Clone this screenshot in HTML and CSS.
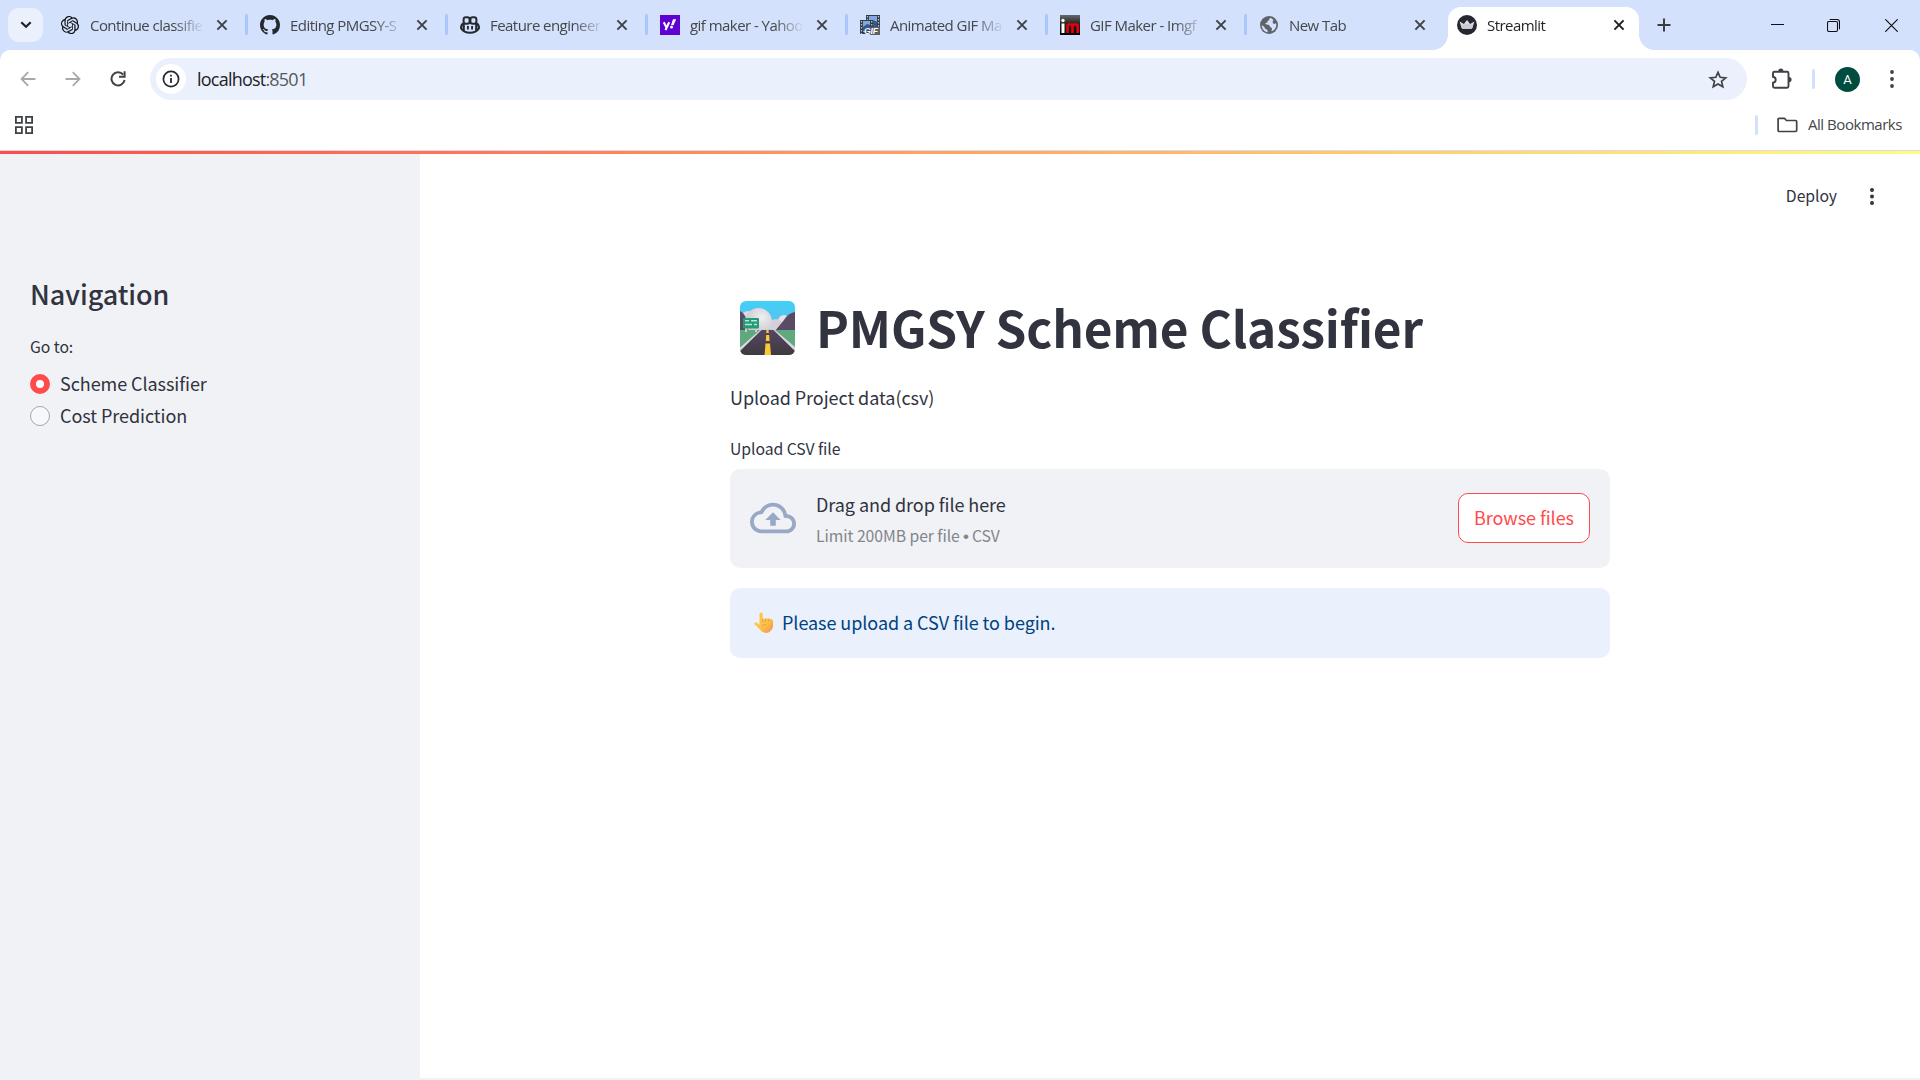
FILE: index.html
```html
<!DOCTYPE html>
<html lang="en">
<head>
<meta charset="utf-8">
<title>Streamlit</title>
<link rel="stylesheet" href="styles.css">
</head>
<body>
<svg class="defs" aria-hidden="true">
  <symbol id="close" viewBox="0 0 12 12"><path d="M1.4 1.4l9.2 9.2M10.6 1.4l-9.2 9.2" fill="none" stroke="currentColor" stroke-width="2"/></symbol>
</svg>
<div class="browser">
  <div class="tabstrip">
    <button class="tab-search"><svg width="12" height="8" viewBox="0 0 12 8"><path d="M1.3 1.3L6 5.8l4.700-4.500" fill="none" stroke="#1f2124" stroke-width="2.200"/></svg></button>
    <div class="tabs">
      <div class="tab">
        <svg class="fav" viewBox="-1.200 -1.200 26.400 26.400"><path fill="#111" d="M22.2819 9.8211a5.9847 5.9847 0 0 0-.5157-4.9108 6.0462 6.0462 0 0 0-6.5098-2.9A6.0651 6.0651 0 0 0 4.9807 4.1818a5.9847 5.9847 0 0 0-3.9977 2.9 6.0462 6.0462 0 0 0 .7427 7.0966 5.98 5.98 0 0 0 .511 4.9107 6.051 6.051 0 0 0 6.5146 2.9001A5.9847 5.9847 0 0 0 13.2599 24a6.0557 6.0557 0 0 0 5.7718-4.2058 5.9894 5.9894 0 0 0 3.9977-2.9001 6.0557 6.0557 0 0 0-.7475-7.0729zm-9.022 12.6081a4.4755 4.4755 0 0 1-2.8764-1.0408l.1419-.0804 4.7783-2.7582a.7948.7948 0 0 0 .3927-.6813v-6.7369l2.02 1.1686a.071.071 0 0 1 .038.052v5.5826a4.504 4.504 0 0 1-4.4945 4.4944zm-9.6607-4.1254a4.4708 4.4708 0 0 1-.5346-3.0137l.142.0852 4.783 2.7582a.7712.7712 0 0 0 .7806 0l5.8428-3.3685v2.3324a.0804.0804 0 0 1-.0332.0615L9.74 19.9502a4.4992 4.4992 0 0 1-6.1408-1.6464zM2.3408 7.8956a4.485 4.485 0 0 1 2.3655-1.9728V11.6a.7664.7664 0 0 0 .3879.6765l5.8144 3.3543-2.0201 1.1685a.0757.0757 0 0 1-.071 0l-4.8303-2.7865A4.504 4.504 0 0 1 2.3408 7.872zm16.5963 3.8558L13.1038 8.364 15.1192 7.2a.0757.0757 0 0 1 .071 0l4.8303 2.7913a4.4944 4.4944 0 0 1-.6765 8.1042v-5.6772a.79.79 0 0 0-.407-.667zm2.0107-3.0231l-.142-.0852-4.7735-2.7818a.7759.7759 0 0 0-.7854 0L9.409 9.2297V6.8974a.0662.0662 0 0 1 .0284-.0615l4.8303-2.7866a4.4992 4.4992 0 0 1 6.6802 4.66zM8.3065 12.863l-2.02-1.1638a.0804.0804 0 0 1-.038-.0567V6.0742a4.4992 4.4992 0 0 1 7.3757-3.4537l-.142.0805L8.704 5.459a.7948.7948 0 0 0-.3927.6813zm1.0976-2.3654l2.602-1.4998 2.6069 1.4998v2.9994l-2.5974 1.4997-2.6067-1.4997Z"/></svg>
        <span class="label">Continue classifie</span><svg class="x"><use href="#close"/></svg><i class="sep"></i>
      </div>
      <div class="tab">
        <svg class="fav" viewBox="0 0 16 16"><path fill="#24292f" d="M8 0C3.58 0 0 3.58 0 8c0 3.54 2.29 6.53 5.47 7.59.4.07.55-.17.55-.38 0-.19-.01-.82-.01-1.49-2.01.37-2.53-.49-2.69-.94-.09-.23-.48-.94-.82-1.13-.28-.15-.68-.52-.01-.53.63-.01 1.08.58 1.23.82.72 1.21 1.87.87 2.33.66.07-.52.28-.87.51-1.07-1.78-.2-3.64-.89-3.64-3.95 0-.87.31-1.59.82-2.15-.08-.2-.36-1.02.08-2.12 0 0 .67-.21 2.2.82.64-.18 1.320-.27 2-.27s1.360.09 2 .27c1.530-1.040 2.200-.82 2.200-.82.44 1.100.16 1.920.08 2.120.51.56.82 1.270.82 2.150 0 3.070-1.870 3.750-3.650 3.950.29.25.54.73.54 1.480 0 1.070-.01 1.930-.01 2.200 0 .21.15.46.55.38A8.010 8.010 0 0 0 16 8c0-4.420-3.580-8-8-8z"/></svg>
        <span class="label">Editing PMGSY-S</span><svg class="x"><use href="#close"/></svg><i class="sep"></i>
      </div>
      <div class="tab">
        <svg class="fav" viewBox="0 0 20 20"><g fill="none" stroke="#24292f"><rect x="3.600" y="2.200" width="6" height="6.600" rx="2.300" stroke-width="2"/><rect x="10.400" y="2.200" width="6" height="6.600" rx="2.300" stroke-width="2"/><path d="M3.500 8.500C1.200 9.500 1 10.800 1 13.200c1.800 2.900 5 4.600 9 4.600s7.200-1.700 9-4.600c0-2.400-.2-3.700-2.500-4.700" stroke-width="2"/><path d="M3.700 9v6.800M16.300 9v6.800" stroke-width="2.200"/><path d="M7.900 11v3.400M12.100 11v3.400" stroke-width="1.900"/></g></svg>
        <span class="label">Feature engineer</span><svg class="x"><use href="#close"/></svg><i class="sep"></i>
      </div>
      <div class="tab">
        <svg class="fav" viewBox="0 0 20 20"><path fill="#5f01d1" d="M0 0h20v20H0z"/><path d="M3.800 7.200l2.700 5.400M9.200 7.200l-3.700 7.800" stroke="#fff" stroke-width="2.100" fill="none"/><path d="M13 4.200h3.200l-2.700 6h-2.500z" fill="#fff"/><circle cx="11.500" cy="12.200" r="1.400" fill="#fff"/></svg>
        <span class="label">gif maker - Yahoo</span><svg class="x"><use href="#close"/></svg><i class="sep"></i>
      </div>
      <div class="tab">
        <svg class="fav" viewBox="0 0 20 20"><path fill="#333b46" d="M6 0h14v13H6z"/><path fill="#83a9dc" d="M9 1h8v11H9z"/><path fill="#35588f" d="M9 8l4-3 4 2v5H9z"/><path d="M7.500 1v12M18.500 1v12" stroke="#b5bfcc" stroke-width="1.300" stroke-dasharray="1.500 1.500"/><path fill="#333b46" d="M0 5h13v14H0z"/><path fill="#83a9dc" d="M3 6h7v11H3z"/><path fill="#35588f" d="M3 12l4-3 3 1v6H3z"/><path d="M1.500 6v13M11.700 6v6" stroke="#b5bfcc" stroke-width="1.300" stroke-dasharray="1.500 1.500"/><path fill="#5d6268" d="M10 12h10v8H10z"/><text x="4" y="19" class="giftext">GIF</text></svg>
        <span class="label">Animated GIF Ma</span><svg class="x"><use href="#close"/></svg><i class="sep"></i>
      </div>
      <div class="tab narrow">
        <svg class="fav" viewBox="0 0 20 20"><defs><linearGradient id="img" x2="0" y2="1"><stop stop-color="#686868"/><stop offset=".45" stop-color="#222"/><stop offset="1" stop-color="#050505"/></linearGradient></defs><path fill="url(#img)" d="M0 0h20v20H0z"/><path d="M3 8.500V18" stroke="#fff" stroke-width="3"/><circle cx="3" cy="5.500" r="1.700" fill="#fff"/><path d="M7.500 18V11q0-1.500 1.500-1.500h2q1.500 0 1.500 1.500v7M12.500 11q0-1.500 1.500-1.500h2.200q1.500 0 1.500 1.500v7" fill="none" stroke="#e6000b" stroke-width="2.700"/></svg>
        <span class="label">GIF Maker - Imgf</span><svg class="x"><use href="#close"/></svg><i class="sep"></i>
      </div>
      <div class="tab last">
        <svg class="fav globe" viewBox="0 0 18 18"><circle cx="9" cy="9" r="9" fill="#5f6368"/><path d="M11 1.900C9.200 2.100 9 3.300 9.300 4.300 7.700 4.500 7.200 5.300 7.500 6.400L5.200 7.300C5.700 9 8 8.300 9 9.100c1.200 1 .6 2.100 2 2.300 1.300.2 1.200 1.600.3 3.900 3-.8 5-3.400 5-6.300 0-.7-.1-1.100-.3-1.700-1.400.9-2.700.8-3.100-.2-.5-1.200-.3-2.200.6-2.900C12.700 3.200 12 2.400 11 1.900zM1.700 9c0 3.700 2.600 6.700 6 7.200 0-1.800-.1-2.500-1.200-2.700-1.400-.3-1.500-1.800-2.300-2.600C3.300 10 2.300 10 1.700 9z" fill="#d3e1fc"/></svg>
        <span class="label">New Tab</span><svg class="x"><use href="#close"/></svg>
      </div>
      <div class="tab active">
        <svg class="fav" viewBox="0 0 20 20"><circle cx="10" cy="10" r="10" fill="#262730"/><path d="M2.600 6.500l4.300 2.400L10 5l3.100 3.900 4.300-2.400-2 6.200q-.3 1-1.300 1H5.900q-1 0-1.300-1z" fill="#e0e1e3"/><path d="M3.700 10l6.300-1.500L16.300 10l-.9 2.700q-.3 1-1.300 1H5.900q-1 0-1.300-1z" fill="#cbccd0"/></svg>
        <span class="label">Streamlit</span><svg class="x"><use href="#close"/></svg>
      </div>
    </div>
    <svg class="newtab" width="14" height="14" viewBox="0 0 14 14"><path d="M7 .5v13M.5 7h13" stroke="#3c3d40" stroke-width="2"/></svg>
    <div class="window-controls">
      <svg width="13" height="13" viewBox="0 0 13 13"><path d="M0 5.500h13" stroke="#111"/></svg>
      <svg width="13" height="13" viewBox="0 0 13 13" fill="none" stroke="#111" stroke-width="1.100"><rect x=".5" y="2.500" width="10" height="10" rx="1.500"/><path d="M2.700.5H10q2.500 0 2.500 2.500v7.300"/></svg>
      <svg width="13" height="13" viewBox="0 0 13 13"><path d="M.3.3l12.400 12.400M12.700.3L.3 12.700" stroke="#111" stroke-width="1.200"/></svg>
    </div>
  </div>
  <div class="chrome">
    <div class="toolbar">
      <div class="nav-icons">
        <svg width="16" height="16" viewBox="0 0 16 16" fill="none" stroke="#a7a9ac" stroke-width="1.800"><path d="M15.500 8H1.700M8.200 1.200L1.500 8l6.700 6.800"/></svg>
        <svg width="16" height="16" viewBox="0 0 16 16" fill="none" stroke="#a7a9ac" stroke-width="1.800"><path d="M.5 8h13.800M7.800 1.200L14.500 8l-6.700 6.800"/></svg>
        <svg width="16" height="16" viewBox="0 0 16 16" fill="none" stroke="#3f4246" stroke-width="2"><path d="M13.200 3.600A6.600 6.600 0 1 0 14.600 9"/><path d="M14.600.2v5.600H9" /></svg>
      </div>
      <div class="omnibox">
        <span class="info"><svg width="18" height="18" viewBox="0 0 18 18"><circle cx="9" cy="9" r="7.600" fill="none" stroke="#26282b" stroke-width="1.700"/><path d="M9 8v5M9 4.700v1.900" stroke="#26282b" stroke-width="1.800"/></svg></span>
        <span class="url">localhost<em>:8501</em></span>
        <svg class="star" width="20" height="19" viewBox="0 0 20 19"><path d="M10 2.300l2.200 5 5.500.5-4.200 3.600 1.300 5.400L10 14l-4.800 2.800 1.300-5.400-4.200-3.600 5.500-.5z" fill="none" stroke="#3f4246" stroke-width="1.700"/></svg>
      </div>
      <div class="actions">
        <svg class="puzzle" width="22" height="22" viewBox="0 0 22 22"><path d="M3.500 3.700H16q1.500 0 1.500 1.500v13q0 1.500-1.500 1.500H3.500q-1.500 0-1.500-1.500v-3.500q2.700-.5 2.700-3T2 8.700V5.200q0-1.500 1.500-1.500z" fill="none" stroke="#3f4246" stroke-width="1.900"/><path d="M7.200 3.200a2.600 2.600 0 0 1 5.200 0zM18 9a2.600 2.600 0 0 1 0 5.200z" fill="#3f4246"/></svg>
        <i class="divider"></i>
        <span class="avatar">A</span>
        <svg class="kebab" width="4" height="18" viewBox="0 0 4 18" fill="#3f4246"><circle cx="2" cy="2" r="1.900"/><circle cx="2" cy="9" r="1.900"/><circle cx="2" cy="16" r="1.900"/></svg>
      </div>
    </div>
    <div class="bookmarks">
      <svg class="apps" width="18" height="18" viewBox="0 0 18 18" fill="none" stroke="#3f4246" stroke-width="1.800"><path d="M.9.9h6v6h-6zM11.100.9h6v6h-6zM.9 11.100h6v6h-6zM11.100 11.100h6v6h-6z"/></svg>
      <i class="divider"></i>
      <svg class="folder" width="21" height="16" viewBox="0 0 21 16"><path d="M2 1.400h5.500l2 2.100H18.500q1.200 0 1.200 1.200v8.600q0 1.200-1.200 1.200H2.300q-1.200 0-1.200-1.200V2.400q0-1 .9-1z" fill="none" stroke="#3f4246" stroke-width="1.700"/></svg>
      <span class="all">All Bookmarks</span>
    </div>
  </div>
</div>
<div class="decoration"></div>
<div class="app">
  <aside class="sidebar">
    <h2>Navigation</h2>
    <p class="small">Go to:</p>
    <div class="radio"><span class="dot on"></span><span>Scheme Classifier</span></div>
    <div class="radio"><span class="dot"></span><span>Cost Prediction</span></div>
  </aside>
  <main>
    <header><span class="deploy">Deploy</span><svg width="4" height="17" viewBox="0 0 4 17" fill="#31333f"><circle cx="2" cy="2" r="2"/><circle cx="2" cy="8.500" r="2"/><circle cx="2" cy="15" r="2"/></svg></header>
    <section class="block">
      <h1>
        <svg class="road" width="55" height="54" viewBox="0 0 55 54">
          <defs>
            <clipPath id="rr"><rect width="55" height="54" rx="6"/></clipPath>
            <linearGradient id="sky" x2="0" y2="1"><stop stop-color="#41d0f6"/><stop offset="1" stop-color="#62bdf0"/></linearGradient>
            <radialGradient id="cl" cx=".62" cy=".35" r=".7"><stop stop-color="#f1eff2"/><stop offset="1" stop-color="#c6c2ca"/></radialGradient>
            <linearGradient id="rd" x2="0" y2="1"><stop stop-color="#574661"/><stop offset="1" stop-color="#3d3b40"/></linearGradient>
          </defs>
          <g clip-path="url(#rr)">
            <path fill="url(#sky)" d="M0 0h55v30H0z"/>
            <circle cx="44" cy="20" r="6" fill="#e4e1e7"/><circle cx="36" cy="25" r="7" fill="#d4d0d8"/>
            <circle cx="8" cy="17" r="7" fill="#dedae0"/>
            <path d="M0 10q4 2 6 7l13 13H0zM55 11q-7 1-11 8L35 30h20z" fill="#594b65"/>
            <circle cx="18.500" cy="20.500" r="13.500" fill="url(#cl)"/>
            <path d="M0 29h55v25H0z" fill="#5fa97c"/>
            <path d="M20 29h15l24 25H-4z" fill="url(#rd)"/>
            <path d="M20 29h1.500L0 50v-3.500zM33.500 29H35l20 17v4z" fill="#dcd7df"/>
            <path d="M26.500 29h2l.3 3h-2.600zM26.200 34h3l.4 6h-3.800zM25.500 42.500h4.500l1 11.500h-6.500z" fill="#fcc737"/>
            <path d="M5 26h2v5H5zM15 26h2v5h-2z" fill="#cfcbd4"/>
            <rect x="3" y="17" width="16" height="10.500" rx="1" fill="#239c75"/>
            <path d="M5 19.800h4M11 19.800h6M5 23.500h7M14 23.500h3" stroke="#bbe6d5" stroke-width="1.500"/>
          </g>
        </svg>
        <span>PMGSY Scheme Classifier</span>
      </h1>
      <p class="body">Upload Project data(csv)</p>
      <p class="small">Upload CSV file</p>
      <div class="dropzone">
        <svg class="cloud" width="46" height="46" viewBox="0 0 24 24"><path fill="#98a8c6" d="M19.350 10.040A7.490 7.490 0 0 0 12 4C9.110 4 6.600 5.640 5.350 8.040A5.994 5.994 0 0 0 0 14c0 3.310 2.690 6 6 6h13c2.760 0 5-2.240 5-5 0-2.640-2.050-4.780-4.650-4.960zM19 18H6c-2.210 0-4-1.790-4-4 0-2.050 1.530-3.760 3.560-3.970l1.070-.11.5-.95A5.469 5.469 0 0 1 12 6c2.620 0 4.880 1.860 5.390 4.430l.3 1.500 1.530.11A2.980 2.980 0 0 1 22 15c0 1.650-1.350 3-3 3zM8 13h2.550v3h2.900v-3H16l-4-4z"/></svg>
        <div class="dz-text"><span class="body">Drag and drop file here</span><span class="small muted">Limit 200MB per file <span class="bullet">•</span> CSV</span></div>
        <button class="browse">Browse files</button>
      </div>
      <div class="alert">
        <svg width="20" height="22" viewBox="0 0 20 22"><defs><linearGradient id="hd" x2="1" y2="1"><stop stop-color="#ffc83d"/><stop offset=".6" stop-color="#fcc04c"/><stop offset="1" stop-color="#f58a53"/></linearGradient></defs><path d="M5.500 2q0-1.600 1.600-1.600T8.700 2v5q1-1 2.300-.4 1-.8 2.300-.1 1.200-.6 2.300.2 1.300-.3 2.300.6 1.200.9 1.200 2.500v4q0 2.800-2 4.600-1.500 2.400-5 2.600-3.300 0-5.200-2.600L.8 12.600q-.7-1.300.4-2 1-.6 2 .3l2.300 1.900z" fill="url(#hd)"/><path d="M8.700 7v3.300M11.500 7.200v2.600M14.700 7.200v2.400M7.500 14.300q2.300-1.900 4.600-1.900" stroke="#ec9a35" stroke-width=".9" fill="none"/></svg>
        <span>Please upload a CSV file to begin.</span>
      </div>
    </section>
  </main>
</div>
</body>
</html>
```
FILE: styles.css
```css
* { box-sizing: border-box; }
html, body { margin: 0; height: 100%; }
body {
  display: flex; flex-direction: column; width: 1920px; height: 1080px; overflow: hidden;
  background: #fff; color: #31333f;
  font-family: "Noto Sans CJK SC", sans-serif; font-size: 18px; font-weight: 400; letter-spacing: -0.06px;
}
h1, h2, p { margin: 0; }
svg { display: block; flex: none; }
.defs { position: absolute; width: 0; height: 0; }
button { font: inherit; letter-spacing: inherit; padding: 0; border: 0; }

/* Browser window */
.browser { height: 151px; flex: none; background: #d3e1fc; font-family: "Open Sans", sans-serif; border-bottom: 1px solid #dadce0; }
.tabstrip { display: flex; height: 50px; align-items: center; }
.tab-search { display: flex; align-items: center; justify-content: center; width: 35px; height: 34px; margin-left: 8px; border-radius: 11px; background: #eaf1fc; }
.tabs { display: flex; height: 50px; margin-left: 7px; }
.tab { position: relative; display: flex; align-items: center; width: 200px; padding-left: 10px; font-size: 15px; color: #45474a; }
.tab.narrow { width: 199px; }
.tab.last { width: 198px; }
.fav { width: 20px; height: 20px; margin-right: 10px; }
.fav.globe { width: 18px; height: 18px; margin: 0 11px 0 1px; }
.label { width: 112px; white-space: nowrap; letter-spacing: -0.55px; line-height: 24px; margin-top: 0;
  -webkit-mask-image: linear-gradient(90deg, #000 84px, transparent 114px); mask-image: linear-gradient(90deg, #000 84px, transparent 114px); }
.x { width: 12px; height: 12px; margin-left: 14px; color: #3f4246; }
.narrow .x, .last .x { margin-left: 13px; }
.sep { position: absolute; right: 2px; top: 14px; width: 3px; height: 21px; border-radius: 2px; background: #a8c7fa; }
.tab.active { width: 191px; height: 43px; margin: 7px 0 0 1px; padding: 0 0 7px 9px; border-radius: 13px 13px 0 0; background: #fff; color: #1f2124; }
.tab.active::before, .tab.active::after { content: ""; position: absolute; bottom: 0; width: 15px; height: 15px; }
.tab.active::before { right: 100%; background: radial-gradient(circle at 0 0, transparent 14.500px, #fff 15px); }
.tab.active::after { left: 100%; background: radial-gradient(circle at 100% 0, transparent 14.500px, #fff 15px); }
.active .x { color: #1f2124; }
.newtab { margin-left: 18px; }
.window-controls { display: flex; gap: 44px; margin-left: auto; padding-right: 22px; }
.window-controls svg:first-child { margin-right: -1px; }
.window-controls svg:last-child { margin-left: 1px; }
.chrome { height: 100px; background: #fff; border-radius: 10px 10px 0 0; padding-top: 8px; }
.toolbar { display: flex; align-items: center; height: 42px; }
.nav-icons { display: flex; gap: 29px; width: 150px; padding-left: 20px; }
.omnibox { display: flex; align-items: center; width: 1597px; height: 42px; padding: 0 19px 0 6px; border-radius: 21px; background: #eaf1fc; }
.info { display: flex; align-items: center; justify-content: center; width: 30px; height: 30px; border-radius: 50%; background: #fff; }
.url { margin-left: 11px; font-size: 18px; letter-spacing: -0.78px; color: #1f2124; }
.url em { font-style: normal; color: #55585c; }
.star { margin-left: auto; }
.actions { display: flex; align-items: center; flex: 1; padding-left: 24px; }
.divider { width: 3px; height: 20px; border-radius: 2px; background: #d3e1fc; }
.actions .divider { margin-left: 19px; }
.avatar { display: flex; align-items: center; justify-content: center; width: 25px; height: 25px; margin: 0 0 0 20px; border-radius: 50%; background: #004d40; color: #fff; font: 13px Roboto, sans-serif; }
.kebab { margin-left: 30px; }
.bookmarks { display: flex; align-items: center; height: 50px; padding: 0 18px 1px 15px; }
.apps { margin-right: auto; }
.folder { margin: 0 10px 0 19px; }
.all { width: 94px; font-size: 15px; letter-spacing: -0.46px; line-height: 20px; margin-top: -1px; color: #45474a; white-space: nowrap; }
.giftext { font: italic bold 8.500px "Liberation Sans", sans-serif; fill: #fff; }

/* Streamlit page */
.decoration { height: 3px; flex: none; background: linear-gradient(90deg, #ff4b4b, #fffd80); }
.app { display: flex; flex: 1; min-height: 0; background: #f0f2f6; }
.sidebar { width: 420px; padding: 122px 30px 0; }
.sidebar h2 { font-size: 27px; line-height: 36px; font-weight: 500; letter-spacing: -0.05px; }
.small { font-size: 15.75px; line-height: 24px; }
.sidebar .small { margin: 23px 0 8px; }
.radio { display: flex; align-items: center; gap: 10px; height: 32px; line-height: 32px; }
.dot { width: 20px; height: 20px; margin-top: 2px; border-radius: 50%; background: #f7f8fc; border: 1px solid #a3a5ad; }
.dot.on { border: 6px solid #ff4b4b; background: #fff; }
main { flex: 1; height: 924px; background: #fff; }
header { display: flex; align-items: center; justify-content: flex-end; gap: 33px; height: 85px; padding-right: 46px; font-size: 15.75px; }
.deploy { line-height: 24px; margin-top: -2px; }
.block { width: 880px; margin: 54px 0 0 310px; }
h1 { display: flex; align-items: center; gap: 21px; height: 66px; padding-left: 10px; font-size: 49.500px; line-height: 66px; font-weight: 700; letter-spacing: -0.18px; white-space: nowrap; }
h1 span { padding-top: 2px; }
.road { margin-top: 4px; }
.body { line-height: 32px; }
.block > .body { margin: 22px 0 24px; }
.dropzone { display: flex; align-items: center; height: 99px; margin: 8px 0 20px; padding: 0 20px 2px; border-radius: 10px; background: #f0f2f6; }
.dz-text { display: flex; flex-direction: column; gap: 1px; margin-left: 20px; padding-top: 3px; }
.dz-text .small { line-height: 30px; }
.muted { color: #83858c; }
.bullet { font-family: "Liberation Sans", sans-serif; font-size: 17px; line-height: 1; margin: 0 -0.3px; }
.browse { width: 132px; height: 50px; margin-left: auto; padding-bottom: 2px; border: 1px solid #ff4b4b; border-radius: 10px; background: #fff; color: #ff4b4b; }
.alert { display: flex; align-items: center; gap: 8px; height: 70px; padding: 0 24px; border-radius: 10px; background: #eaf1fc; color: #004280; }
.alert span { margin-top: -2px; }
```
